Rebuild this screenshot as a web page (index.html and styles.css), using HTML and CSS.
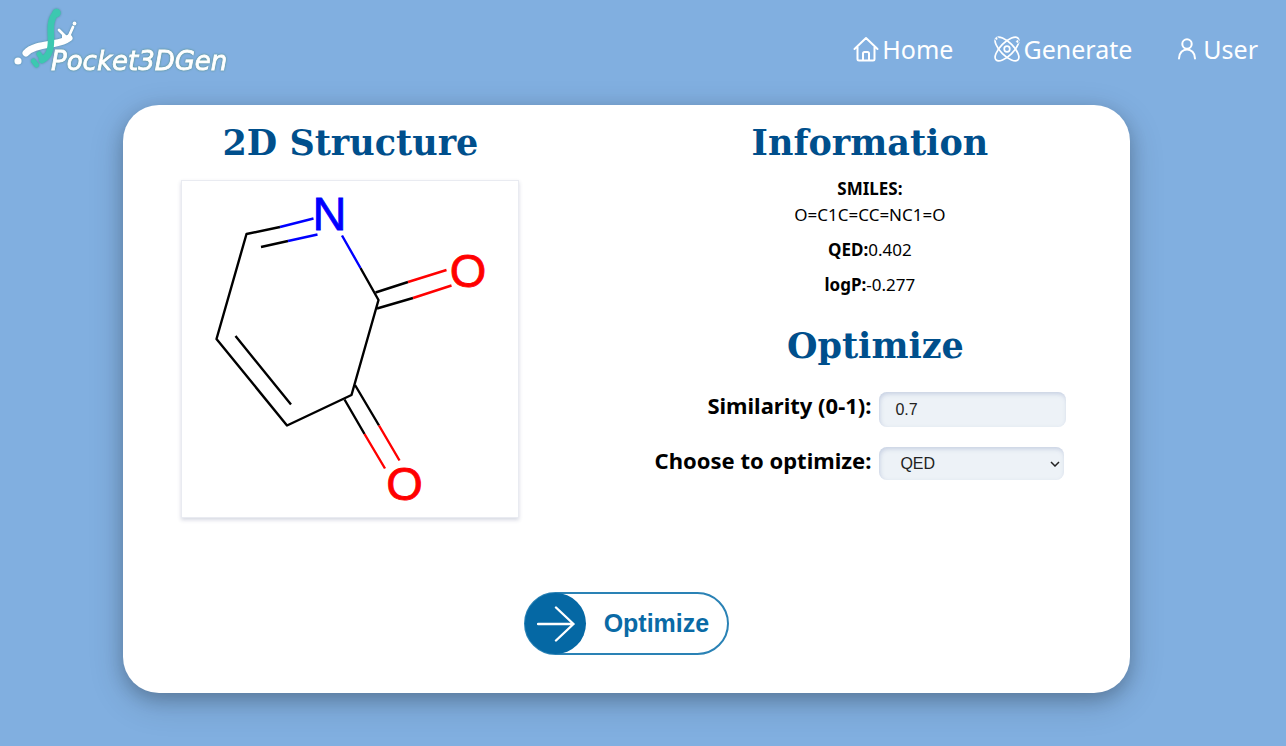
FILE: index.html
```html
<!DOCTYPE html>
<html lang="en">
<head>
<meta charset="utf-8">
<meta name="viewport" content="width=device-width, initial-scale=1">
<title>Pocket3DGen</title>
<link rel="stylesheet" href="styles.css">
</head>
<body>
<header class="topbar">
  <a class="brand" href="#" aria-label="Pocket3DGen">
    <svg class="brand-art" viewBox="0 0 240 80" width="240" height="80">
      <g class="brand-shape">
        <circle cx="18" cy="61" r="3.6" fill="#fff"/>
        <path d="M26 53C32 46 45 45 54 43.500C60 42.500 65 41 69 38" fill="none" stroke="#fff" stroke-width="7" stroke-linecap="round"/>
        <path d="M59 30L65 36M73 27L69 36" fill="none" stroke="#fff" stroke-width="2.800" stroke-linecap="round"/>
        <path d="M62 34Q67 37 71 34L71.500 40Q67 43 62 42Z" fill="#fff"/>
        <circle cx="74.500" cy="23.500" r="1.900" fill="#fff"/>
        <path d="M56 13C49 20 51 31 51 39C51 48 50 56 42 60" fill="none" stroke="#3cc8b0" stroke-width="6.500" stroke-linecap="round"/>
        <circle cx="56.500" cy="13" r="4.200" fill="#3cc8b0"/>
        <path d="M33.500 61L36.500 65M39 54L43 60" fill="none" stroke="#3cc8b0" stroke-width="5" stroke-linecap="round"/>
      </g>
      <text class="brand-name" x="51" y="70">Pocket3DGen</text>
    </svg>
  </a>
  <nav class="nav">
    <a class="nav-link" href="#">
      <svg class="icon" viewBox="0 0 26 26"><path d="M1.500 13L13 2L24.500 13M4.500 11V23Q4.500 24.500 6 24.500H20Q21.500 24.500 21.500 23V11M10 24V17.500Q10 16 11.500 16H14.500Q16 16 16 17.500V24"/></svg>
      <span>Home</span>
    </a>
    <a class="nav-link" href="#">
      <svg class="icon icon-atom" viewBox="0 0 26 26"><ellipse cx="13" cy="13" rx="15.500" ry="6.500" transform="rotate(45 13 13)"/><ellipse cx="13" cy="13" rx="15.500" ry="6.500" transform="rotate(-45 13 13)"/><circle cx="13" cy="13" r="2.800"/><circle class="dot" cx="2.500" cy="2.500" r="1.800"/><circle class="dot" cx="23.500" cy="5.500" r="1.800"/></svg>
      <span>Generate</span>
    </a>
    <a class="nav-link nav-user" href="#">
      <svg class="icon icon-user" viewBox="0 0 20 26"><circle cx="10" cy="8" r="4.700"/><path d="M2 22.500C2 10.500 18 10.500 18 22.500"/></svg>
      <span>User</span>
    </a>
  </nav>
</header>

<main class="card">
  <div class="columns">
    <section class="structure">
      <h1 class="title">2D Structure</h1>
      <svg class="molecule" viewBox="0 0 336 336" role="img" aria-label="O=C1C=CC=NC1=O">
        <g class="bond">
          <path d="M98 46L64.500 53L34.500 158L105 244.500L169.500 214L196.500 119L178.500 87"/>
          <path d="M79 66L106 60M53.500 155L109 223.500"/>
          <path d="M193.500 111.500L226 101M195 127.500L231 117"/>
          <path d="M173 204L197 244.500M162.500 218.500L182.500 253"/>
        </g>
        <g class="bond bond-n"><path d="M98 46L131.500 37.500M106 60L135.500 53.500M178.500 87L160 54.500"/></g>
        <g class="bond bond-o"><path d="M226 101L264.500 89M231 117L269.500 104.500M197 244.500L217.500 279.500M182.500 253L203 287.500"/></g>
        <text class="atom atom-n" x="147.500" y="49">N</text>
        <text class="atom atom-o" x="286" y="106">O</text>
        <text class="atom atom-o" x="222.500" y="319">O</text>
      </svg>
    </section>
    <div class="details">
      <section class="info">
        <h2 class="title">Information</h2>
        <p class="fact"><strong>SMILES:</strong><br>O=C1C=CC=NC1=O</p>
        <p class="fact"><strong>QED:</strong>0.402</p>
        <p class="fact"><strong>logP:</strong>-0.277</p>
      </section>
      <section class="optimize">
        <h2 class="title">Optimize</h2>
        <form class="form" id="optimize-form">
          <label class="label" for="similarity">Similarity (0-1):</label>
          <input class="field" id="similarity" type="text" value="0.7">
          <label class="label" for="target">Choose to optimize:</label>
          <span class="select-wrap">
            <select class="field field-select" id="target"><option>QED</option><option>logP</option></select>
            <svg class="chevron" viewBox="0 0 10 6"><path d="M1 1L5 5L9 1"/></svg>
          </span>
        </form>
      </section>
    </div>
  </div>
  <button class="go" type="submit" form="optimize-form">
    <span class="go-disc"><svg class="go-arrow" viewBox="0 0 38 36"><path d="M1 18H36.500M19 1.500L36.500 18L19 34.500"/></svg></span>
    <span class="go-label">Optimize</span>
  </button>
</main>
</body>
</html>
```
FILE: styles.css
```css
* { box-sizing: border-box; }

body {
  margin: 0;
  min-height: 100vh;
  background: #81afe0;
  color: #000;
  font-family: "Segoe UI", "Noto Sans", sans-serif;
}

.topbar {
  display: flex;
  justify-content: space-between;
  align-items: center;
  height: 105px;
  padding-right: 28px;
}

.brand { align-self: flex-start; }
.brand-art { display: block; }
.brand-shape { filter: drop-shadow(0 0 1px #4e8a9c); }
.brand-name {
  fill: #fff;
  stroke: #fff;
  stroke-width: 0.8px;
  font: italic 26px "DejaVu Sans", sans-serif;
  filter: drop-shadow(0 0 1px #4e8a7c);
}

.nav { display: flex; gap: 41px; padding-bottom: 7px; }
.nav-link {
  display: flex;
  align-items: center;
  gap: 3px;
  color: #fff;
  font-size: 25px;
  line-height: 36px;
  text-decoration: none;
}
.nav-user { gap: 6px; margin-left: 4px; }
.icon {
  width: 26px;
  height: 26px;
  fill: none;
  stroke: #fff;
  stroke-width: 2;
  stroke-linecap: round;
  stroke-linejoin: round;
}
.icon-user { width: 20px; }
.icon-atom { stroke-width: 1.7; }
.dot { fill: #fff; stroke: #81afe0; stroke-width: 1; }

.card {
  width: 78.3%;
  margin-left: 9.6%;
  padding: 12px 0 38px;
  border-radius: 36px;
  background: #fff;
  box-shadow: 0 10px 36px rgba(0, 0, 0, 0.16), 0 6px 18px rgba(0, 0, 0, 0.2);
}

.columns { display: grid; grid-template-columns: 454fr 553fr; }
.structure { text-align: center; }
.details { padding-left: 32px; }

.title {
  margin: 0;
  color: #004f8c;
  font: bold 35px/52px Georgia, "DejaVu Serif", serif;
  text-align: center;
}

.molecule {
  display: block;
  width: 338px;
  max-width: 100%;
  margin: 11px auto 0;
  border: 1px solid #e9ebf1;
  box-shadow: 0 2px 4px rgba(50, 60, 110, 0.2);
}
.bond { fill: none; stroke: #000; stroke-width: 2.4; stroke-linejoin: round; }
.bond-n { stroke: #00f; }
.bond-o { stroke: #f00; }
.atom { font: 47px "Liberation Sans", Arial, sans-serif; text-anchor: middle; stroke-width: 0.8px; }
.atom-n { fill: #00f; stroke: #00f; }
.atom-o { fill: #f00; stroke: #f00; }

.info { padding-bottom: 13px; }
.fact {
  margin: 0 0 9px;
  font-size: 17px;
  line-height: 26px;
  text-align: center;
}
.info .title { margin-bottom: 7px; }

.optimize { padding-left: 11px; }
.form {
  display: grid;
  grid-template-columns: 1fr 1fr;
  gap: 20px 8px;
  margin-top: 20px;
}
.label {
  font-size: 22px;
  font-weight: bold;
  line-height: 26px;
  text-align: right;
  white-space: nowrap;
}
.field {
  width: 187px;
  height: 35px;
  padding: 0 16px;
  border: 0;
  border-radius: 8px;
  background: #edf2f7;
  box-shadow: inset 1px 2px 4px rgba(110, 130, 180, 0.3);
  color: #222;
  font: 16px "Liberation Sans", Arial, sans-serif;
}
.select-wrap { position: relative; width: 185px; }
.field-select { display: block; width: 100%; height: 33px; padding: 0 21px; appearance: none; }
.chevron {
  position: absolute;
  right: 4px;
  top: 14px;
  width: 10px;
  height: 6px;
  fill: none;
  stroke: #222;
  stroke-width: 1.5;
  pointer-events: none;
}

.go {
  display: flex;
  align-items: center;
  width: 205px;
  height: 63px;
  margin: 74px auto 0;
  padding: 0;
  border: 2px solid #2a82b5;
  border-radius: 32px;
  background: #fff;
  color: #0a6aa6;
  font: bold 25px "Liberation Sans", Arial, sans-serif;
  cursor: pointer;
}
.go-disc {
  display: grid;
  place-items: center;
  width: 61px;
  height: 61px;
  margin: -1px;
  border-radius: 50%;
  background: #0568a4;
}
.go-arrow { width: 38px; height: 36px; fill: none; stroke: #fff; stroke-width: 2.4; stroke-linecap: round; stroke-linejoin: round; }
.go-label { flex: 1; text-align: center; }
```
